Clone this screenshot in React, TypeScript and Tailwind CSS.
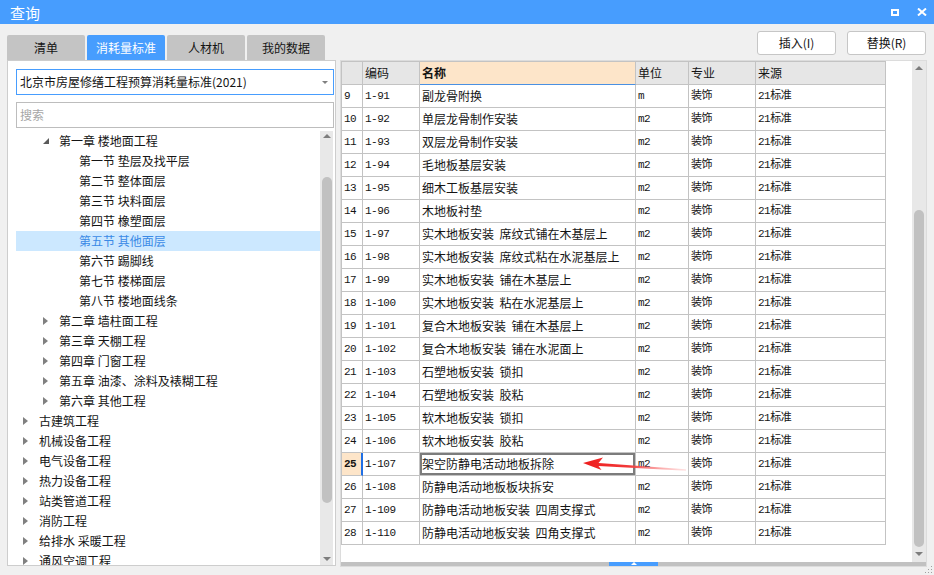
import React from 'react';

type TreeItem = { level: 0 | 1 | 2; label: string; arrow?: 'open' | 'closed'; selected?: boolean };

const tree: TreeItem[] = [
  { level: 1, label: '第一章 楼地面工程', arrow: 'open' },
  { level: 2, label: '第一节 垫层及找平层' },
  { level: 2, label: '第二节 整体面层' },
  { level: 2, label: '第三节 块料面层' },
  { level: 2, label: '第四节 橡塑面层' },
  { level: 2, label: '第五节 其他面层', selected: true },
  { level: 2, label: '第六节 踢脚线' },
  { level: 2, label: '第七节 楼梯面层' },
  { level: 2, label: '第八节 楼地面线条' },
  { level: 1, label: '第二章 墙柱面工程', arrow: 'closed' },
  { level: 1, label: '第三章 天棚工程', arrow: 'closed' },
  { level: 1, label: '第四章 门窗工程', arrow: 'closed' },
  { level: 1, label: '第五章 油漆、涂料及裱糊工程', arrow: 'closed' },
  { level: 1, label: '第六章 其他工程', arrow: 'closed' },
  { level: 0, label: '古建筑工程', arrow: 'closed' },
  { level: 0, label: '机械设备工程', arrow: 'closed' },
  { level: 0, label: '电气设备工程', arrow: 'closed' },
  { level: 0, label: '热力设备工程', arrow: 'closed' },
  { level: 0, label: '站类管道工程', arrow: 'closed' },
  { level: 0, label: '消防工程', arrow: 'closed' },
  { level: 0, label: '给排水 采暖工程', arrow: 'closed' },
  { level: 0, label: '通风空调工程', arrow: 'closed' },
];

const rows: [number, string, string, string][] = [
  [9, '1-91', '副龙骨附换', 'm'],
  [10, '1-92', '单层龙骨制作安装', 'm2'],
  [11, '1-93', '双层龙骨制作安装', 'm2'],
  [12, '1-94', '毛地板基层安装', 'm2'],
  [13, '1-95', '细木工板基层安装', 'm2'],
  [14, '1-96', '木地板衬垫', 'm2'],
  [15, '1-97', '实木地板安装  席纹式铺在木基层上', 'm2'],
  [16, '1-98', '实木地板安装  席纹式粘在水泥基层上', 'm2'],
  [17, '1-99', '实木地板安装  铺在木基层上', 'm2'],
  [18, '1-100', '实木地板安装  粘在水泥基层上', 'm2'],
  [19, '1-101', '复合木地板安装  铺在木基层上', 'm2'],
  [20, '1-102', '复合木地板安装  铺在水泥面上', 'm2'],
  [21, '1-103', '石塑地板安装  锁扣', 'm2'],
  [22, '1-104', '石塑地板安装  胶粘', 'm2'],
  [23, '1-105', '软木地板安装  锁扣', 'm2'],
  [24, '1-106', '软木地板安装  胶粘', 'm2'],
  [25, '1-107', '架空防静电活动地板拆除', 'm2'],
  [26, '1-108', '防静电活动地板板块拆安', 'm2'],
  [27, '1-109', '防静电活动地板安装  四周支撑式', 'm2'],
  [28, '1-110', '防静电活动地板安装  四角支撑式', 'm2'],
];

const levelPad: Record<number, string> = { 0: 'pl-0', 1: 'pl-[20px]', 2: 'pl-[40px]' };

const MONO = "font-['Liberation_Mono','Noto_Sans_CJK_SC',monospace] text-[11px] tracking-[-0.5px]";
const cell = 'border-r border-b border-[#c3c3c3] flex items-center overflow-hidden whitespace-pre';

function UpArrow() {
  return <div className="w-0 h-0 border-x-[4px] border-x-transparent border-b-[4px] border-b-[#7d7d7d]" />;
}
function DownArrow() {
  return <div className="w-0 h-0 border-x-[4px] border-x-transparent border-t-[4px] border-t-[#7d7d7d]" />;
}

export default function App() {
  return (
    <div className="w-[934px] h-[575px] bg-[#f0f0f0] flex flex-col overflow-hidden relative font-['Noto_Sans_CJK_SC','Noto_Sans',sans-serif] text-[12px] text-[#141414]">
      {/* Title bar */}
      <div className="h-[24px] bg-[#479dfe] flex items-center justify-between pl-[10px] pr-[7px] shrink-0">
        <span className="text-white text-[15px] leading-none">查询</span>
        <div className="flex items-center gap-[18px]">
          <div className="w-[8px] h-[7px] border-2 border-white" />
          <svg width="10" height="8" viewBox="0 0 10 8">
            <path d="M1 0.5 L9 7.5 M9 0.5 L1 7.5" stroke="white" strokeWidth="2" />
          </svg>
        </div>
      </div>

      {/* Tabs + buttons */}
      <div className="h-[36px] flex justify-between shrink-0">
        <div className="flex items-end gap-[2px] pl-[7px]">
          <div className="w-[78px] h-[25px] rounded-t-[2px] bg-[#c4c4c4] flex items-center justify-center">清单</div>
          <div className="w-[78px] h-[25px] rounded-t-[2px] bg-[#479dfe] text-white flex items-center justify-center">消耗量标准</div>
          <div className="w-[78px] h-[25px] rounded-t-[2px] bg-[#c4c4c4] flex items-center justify-center">人材机</div>
          <div className="w-[78px] h-[25px] rounded-t-[2px] bg-[#c4c4c4] flex items-center justify-center">我的数据</div>
        </div>
        <div className="flex gap-[11px] pt-[7px] pr-[8px]">
          <div className="w-[79px] h-[24px] bg-white border border-[#c6c6c6] rounded-[3px] flex items-center justify-center">插入(I)</div>
          <div className="w-[79px] h-[24px] bg-white border border-[#c6c6c6] rounded-[3px] flex items-center justify-center">替换(R)</div>
        </div>
      </div>

      {/* Content */}
      <div className="flex items-start">
        {/* Left panel */}
        <div className="ml-[7px] w-[329px] h-[506px] bg-white border border-[#cdcdcd] flex flex-col overflow-hidden">
          <div className="mt-[8px] ml-[8px] w-[318px] h-[26px] border border-[#479dfe] flex items-center justify-between pl-[3px] pr-[5px] shrink-0">
            <span className="text-[12px]">北京市房屋修缮工程预算消耗量标准(2021)</span>
            <div className="w-0 h-0 border-x-[3px] border-x-transparent border-t-[3px] border-t-[#808080]" />
          </div>
          <div className="mt-[7px] ml-[8px] w-[318px] h-[26px] border border-[#bdbdbd] flex items-center pl-[3px] text-[#a6a6a6] shrink-0">
            搜索
          </div>
          <div className="mt-[3px] ml-[8px] flex flex-1 min-h-0">
            <div className="w-[304px] flex flex-col">
              {tree.map((t, i) => (
                <div
                  key={i}
                  className={`h-[20px] shrink-0 flex items-center ${levelPad[t.level]} ${t.selected ? 'bg-[#cce8ff] text-[#3a8ae6]' : ''}`}
                >
                  <div className="w-[23px] h-[20px] flex items-center pl-[7px] shrink-0">
                    {t.arrow === 'closed' && (
                      <div className="w-0 h-0 border-y-[4px] border-y-transparent border-l-[5px] border-l-[#808080]" />
                    )}
                    {t.arrow === 'open' && (
                      <svg width="6" height="6" viewBox="0 0 6 6">
                        <path d="M6 0 L6 6 L0 6 Z" fill="#5a5a5a" />
                      </svg>
                    )}
                  </div>
                  <span className="whitespace-pre">{t.label}</span>
                </div>
              ))}
            </div>
            <div className="w-[13px] bg-[#e8e8e8] flex flex-col items-center relative">
              <div className="mt-[3px]"><UpArrow /></div>
              <div className="mt-[39px] w-[10px] h-[326px] rounded-full bg-[#c1c1c1]" />
              <div className="mt-auto mb-[4px]"><DownArrow /></div>
            </div>
          </div>
        </div>

        {/* Right panel */}
        <div className="ml-[4px] w-[587px] h-[507px] bg-white border border-[#dcdcdc] flex flex-col">
          <div className="flex flex-1 min-h-0">
            <div className="flex-1 min-w-0">
              <div className="w-[545px] border-l border-t border-[#c3c3c3] grid grid-cols-[21px_57px_216px_53px_67px_130px] auto-rows-[23px]">
                {/* header */}
                <div className={`${cell} bg-[#e6e6e6]`} />
                <div className={`${cell} bg-[#e6e6e6] pl-[2px]`}>编码</div>
                <div className="border-r border-b border-r-[#c3c3c3] border-b-[#4a90e2] flex items-center bg-[#fde5c9] pl-[2px] font-bold">名称</div>
                <div className={`${cell} bg-[#e6e6e6] pl-[2px]`}>单位</div>
                <div className={`${cell} bg-[#e6e6e6] pl-[2px]`}>专业</div>
                <div className={`${cell} bg-[#e6e6e6] pl-[2px]`}>来源</div>
                {rows.map(([n, code, name, unit]) => {
                  const sel = n === 25;
                  return (
                    <React.Fragment key={n}>
                      <div
                        className={
                          sel
                            ? `border-r-2 border-r-[#1f6fe5] border-b border-b-[#c3c3c3] flex items-center overflow-hidden bg-[#fde5c9] pl-[2px] font-bold ${MONO}`
                            : `${cell} pl-[2px] ${MONO}`
                        }
                      >
                        {n}
                      </div>
                      <div className={`${cell} pl-[2px] ${MONO}`}>{code}</div>
                      <div className={`${cell} pl-[2px] ${sel ? 'shadow-[inset_0_0_0_2px_#7c7c7c]' : ''}`}>{name}</div>
                      <div className={`${cell} pl-[2px] ${MONO}`}>{unit}</div>
                      <div className={`${cell} pl-[2px] ${MONO}`}>装饰</div>
                      <div className={`${cell} pl-[2px] ${MONO}`}>21标准</div>
                    </React.Fragment>
                  );
                })}
              </div>
            </div>
            <div className="w-[14px] bg-[#e8e8e8] flex flex-col items-center">
              <div className="mt-[5px]"><UpArrow /></div>
              <div className="mt-[140px] w-[10px] h-[337px] rounded-full bg-[#c1c1c1]" />
              <div className="mt-auto mb-[6px]"><DownArrow /></div>
            </div>
          </div>
          <div className="h-[4px] bg-[#c1c1c1] flex shrink-0">
            <div className="ml-[268px] w-[49px] h-[4px] bg-[#479dfe] flex justify-center">
              <div className="w-0 h-0 border-x-[3px] border-x-transparent border-b-[3px] border-b-white" />
            </div>
          </div>
        </div>
      </div>

      {/* Red annotation arrow */}
      <svg className="absolute left-[578px] top-[452px]" width="112" height="24" viewBox="0 0 112 24">
        <defs>
          <linearGradient id="redfade" x1="0" x2="1" y1="0" y2="0">
            <stop offset="0" stopColor="#ee1c1c" />
            <stop offset="0.45" stopColor="#f23a3a" />
            <stop offset="1" stopColor="#ffb0b0" stopOpacity="0.35" />
          </linearGradient>
        </defs>
        <path d="M5 11 L25 5.5 L20.5 11 L108 17.2 L108 18.8 L20.5 14 L23.5 18 Z" fill="url(#redfade)" />
      </svg>

      {/* resize grip */}
      <svg className="absolute right-[1px] bottom-[1px]" width="9" height="9" viewBox="0 0 9 9">
        <rect x="7" y="1" width="1" height="1" fill="#a0a0a0" />
        <rect x="4" y="4" width="1" height="1" fill="#a0a0a0" />
        <rect x="7" y="4" width="1" height="1" fill="#a0a0a0" />
        <rect x="1" y="7" width="1" height="1" fill="#a0a0a0" />
        <rect x="4" y="7" width="1" height="1" fill="#a0a0a0" />
        <rect x="7" y="7" width="1" height="1" fill="#a0a0a0" />
      </svg>
    </div>
  );
}
